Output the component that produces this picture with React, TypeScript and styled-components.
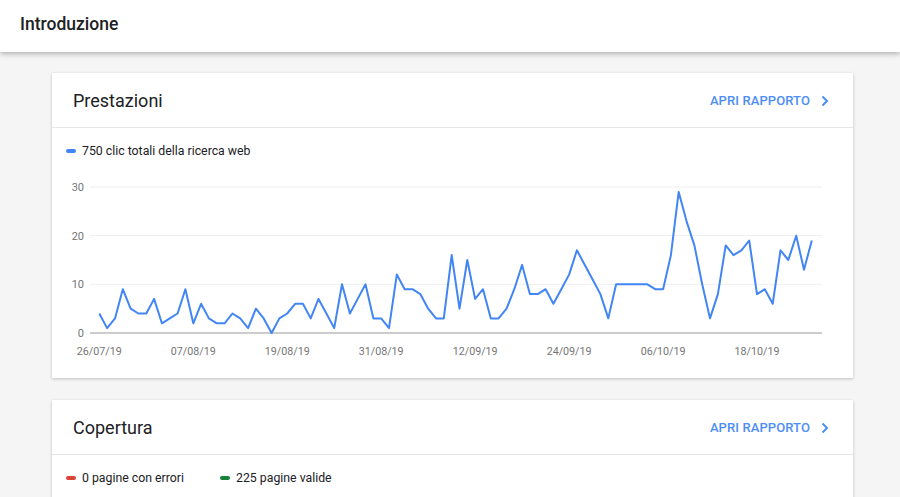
import React from 'react'
import styled, { createGlobalStyle } from 'styled-components'

const clicks = [
  4, 1, 3, 9, 5, 4, 4, 7, 2, 3, 4, 9, 2, 6, 3, 2, 2, 4, 3, 1, 5, 3, 0, 3, 4, 6, 6, 3, 7,
  4, 1, 10, 4, 7, 10, 3, 3, 1, 12, 9, 9, 8, 5, 3, 3, 16, 5, 15, 7, 9, 3, 3, 5, 9, 14, 8, 8, 9, 6, 9, 12, 17,
  14, 11, 8, 3, 10, 10, 10, 10, 10, 9, 9, 16, 29, 23, 18, 10, 3, 8, 18, 16, 17, 19, 8, 9, 6, 17, 15, 20, 13, 19
]
const dateLabels = ['26/07/19', '07/08/19', '19/08/19', '31/08/19', '12/09/19', '24/09/19', '06/10/19', '18/10/19']

const GlobalStyle = createGlobalStyle`
  html, body {
    margin: 0;
    height: 100%;
    overflow: hidden;
    background: #f5f5f5;
    font-family: Roboto, 'Noto Sans', Arial, sans-serif;
  }
`

const TopBar = styled.header`
  box-sizing: border-box;
  height: 52px;
  background: #fff;
  display: flex;
  align-items: center;
  padding: 0 0 5px 20px;
  box-shadow: 0 2px 5px rgba(0, 0, 0, 0.28);
  position: relative;
  z-index: 1;
`
const PageTitle = styled.h1`
  margin: 0;
  font-size: 17.5px;
  font-weight: 500;
  color: #202124;
`
const Content = styled.main`
  display: flex;
  flex-direction: column;
  gap: 22px;
  padding: 21px 47px 0 52px;
`
const Card = styled.section<{ $minHeight?: number }>`
  background: #fff;
  box-shadow: 0 1px 3px rgba(0, 0, 0, 0.22);
  padding-bottom: 8px;
  min-height: ${p => (p.$minHeight ? `${p.$minHeight}px` : 'auto')};
`
const CardHeader = styled.div`
  box-sizing: border-box;
  height: 55px;
  display: flex;
  align-items: center;
  justify-content: space-between;
  padding: 1px 24px 0 21px;
  border-bottom: 1px solid #e6e6e6;
`
const CardTitle = styled.h2`
  margin: 0;
  font-size: 18px;
  font-weight: 400;
  color: #202124;
`
const ReportLink = styled.a`
  display: flex;
  align-items: center;
  gap: 11px;
  font-size: 13px;
  font-weight: 500;
  letter-spacing: 0.1px;
  color: #4d8ef5;
  text-decoration: none;
`
const Legend = styled.div`
  display: flex;
  gap: 36px;
  padding: 15px 14px 0;
`
const LegendItem = styled.div`
  display: flex;
  align-items: center;
  gap: 6px;
  font-size: 12.3px;
  line-height: 16px;
  color: #202124;
`
const Swatch = styled.span<{ $color: string }>`
  width: 10px;
  height: 4px;
  border-radius: 2px;
  background: ${p => p.$color};
`
const ChartSvg = styled.svg`
  display: block;
  margin-top: 11px;
`

const Chevron = () => (
  <svg width="8" height="12" viewBox="0 0 8 12">
    <path d="M1.5 1.5 L6 6 L1.5 10.5" fill="none" stroke="#4d8ef5" strokeWidth="2" />
  </svg>
)

const W = 801
const H = 200
const Y0 = 163
const UNIT = (163 - 17) / 30
const X0 = 47.3
const STEP = 7.83

const ClicksChart = () => {
  const pts = clicks.map((v, i) => `${(X0 + STEP * i).toFixed(1)},${(Y0 - v * UNIT).toFixed(1)}`).join(' ')
  return (
    <ChartSvg width={W} height={H} viewBox={`0 0 ${W} ${H}`}>
      {[10, 20, 30].map(t => (
        <line key={t} x1={38} x2={770} y1={Y0 - t * UNIT} y2={Y0 - t * UNIT} stroke="#eeeeee" strokeWidth={1} />
      ))}
      <line x1={38} x2={770} y1={Y0} y2={Y0} stroke="#cccccc" strokeWidth={2} />
      {[0, 10, 20, 30].map(t => (
        <text key={t} x={32} y={Y0 - t * UNIT + 4} textAnchor="end" fontSize={11} fill="#757575" fontFamily="Roboto, Arial, sans-serif">
          {t}
        </text>
      ))}
      {dateLabels.map((d, k) => (
        <text key={d} x={X0 + STEP * 12 * k} y={185} textAnchor="middle" fontSize={10.7} fill="#757575" fontFamily="Roboto, Arial, sans-serif">
          {d}
        </text>
      ))}
      <polyline points={pts} fill="none" stroke="#4285f4" strokeWidth={2} strokeLinejoin="round" />
    </ChartSvg>
  )
}

export default function App() {
  return (
    <>
      <GlobalStyle />
      <TopBar>
        <PageTitle>Introduzione</PageTitle>
      </TopBar>
      <Content>
        <Card>
          <CardHeader>
            <CardTitle>Prestazioni</CardTitle>
            <ReportLink href="#">APRI RAPPORTO <Chevron /></ReportLink>
          </CardHeader>
          <Legend>
            <LegendItem><Swatch $color="#4285f4" />750 clic totali della ricerca web</LegendItem>
          </Legend>
          <ClicksChart />
        </Card>
        <Card $minHeight={240}>
          <CardHeader>
            <CardTitle>Copertura</CardTitle>
            <ReportLink href="#">APRI RAPPORTO <Chevron /></ReportLink>
          </CardHeader>
          <Legend>
            <LegendItem><Swatch $color="#db4437" />0 pagine con errori</LegendItem>
            <LegendItem><Swatch $color="#188038" />225 pagine valide</LegendItem>
          </Legend>
        </Card>
      </Content>
    </>
  )
}
